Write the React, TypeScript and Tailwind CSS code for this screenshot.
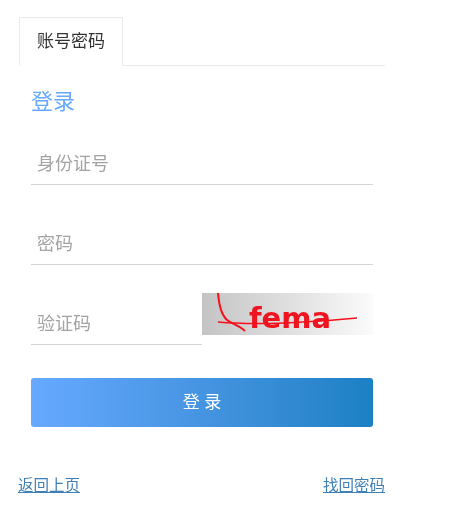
const font = "font-['Liberation_Sans','Noto_Sans_CJK_SC',sans-serif]";

const Field = ({ label, className = "" }: { label: string; className?: string }) => {
  return (
    <div className={`flex h-[44px] items-center border-b border-[#d4d4d4] pt-[4px] pl-[6px] text-[18px] text-[#a3a3a3] ${className}`}>
      {label}
    </div>
  );
};

const Captcha = () => {
  return (
    <div className="relative mt-[-8px] h-[42px] w-[171px] overflow-hidden bg-gradient-to-r from-[#c4c4c4] to-[#fbfbfb]">
      <span className="absolute left-[47px] top-[7px] font-['DejaVu_Sans',sans-serif] text-[29px] leading-[36px] font-bold text-[#ee1520]">
        fema
      </span>
      <svg className="absolute inset-0" width="171" height="42" viewBox="0 0 171 42" fill="none" stroke="#f5101c">
        <path d="M16 0 C17 12 19 21 24 26 C29 31 37 32 43 38" strokeWidth="2" />
        <path d="M16 29 C50 32 90 31 155 25" strokeWidth="1.4" />
      </svg>
    </div>
  );
};

export default function App() {
  return (
    <div className={`h-[528px] w-[468px] bg-white pt-[17px] pl-[19px] blur-[0.4px] ${font}`}>
      <div className="w-[366px]">
        <div className="flex h-[49px] border-b border-[#ebebeb]">
          <div className="mb-[-1px] flex h-[49px] w-[104px] items-center justify-center border border-b-white border-[#ebebeb] text-[17px] text-[#333]">
            账号密码
          </div>
        </div>

        <div className="px-[12px]">
          <h1 className="mt-[23px] text-[22px] leading-[26px] text-[#66a9ff]">登录</h1>

          <Field label="身份证号" className="mt-[26px]" />
          <Field label="密码" className="mt-[36px]" />

          <div className="mt-[36px] flex items-start">
            <Field label="验证码" className="w-[171px]" />
            <Captcha />
          </div>

          <button className="mt-[33px] flex h-[49px] w-full items-center justify-center rounded-[3px] bg-gradient-to-r from-[#66a9ff] to-[#1a80c4] text-[17px] text-white">
            登 录
          </button>
        </div>

        <div className="mt-[49px] flex justify-between text-[15.5px] leading-[20px] text-[#3f7fb8] underline">
          <a href="#back" className="ml-[-1px]">返回上页</a>
          <a href="#reset">找回密码</a>
        </div>
      </div>
    </div>
  );
}
